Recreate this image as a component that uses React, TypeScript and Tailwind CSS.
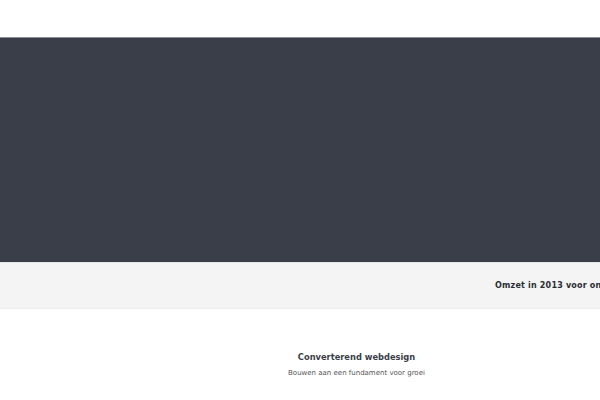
export default function App() {
  return (
    <div className="w-[600px] h-[400px] overflow-hidden bg-white" style={{ fontFamily: '"DejaVu Sans", sans-serif' }}>
      <div className="h-[37px] bg-white" />
      <div className="h-[225px] bg-[#3a3e48] border-t border-[#8a8c90]" />
      <div className="h-[47px] bg-[#f4f4f4] border-t border-[#e6e6e6] border-b border-b-[#ececec] flex items-center overflow-hidden">
        <div className="pl-[495px] whitespace-nowrap text-[8px] tracking-[0.2px] font-bold text-[#2a2d33]">Omzet in 2013 voor ons</div>
      </div>
      <div className="flex flex-col items-center pt-[42px] pl-[113px]">
        <div className="text-[8.3px] font-bold text-[#3a3e48]">Converterend webdesign</div>
        <div className="mt-[5px] text-[7px] text-[#555]">Bouwen aan een fundament voor groei</div>
      </div>
    </div>
  );
}
